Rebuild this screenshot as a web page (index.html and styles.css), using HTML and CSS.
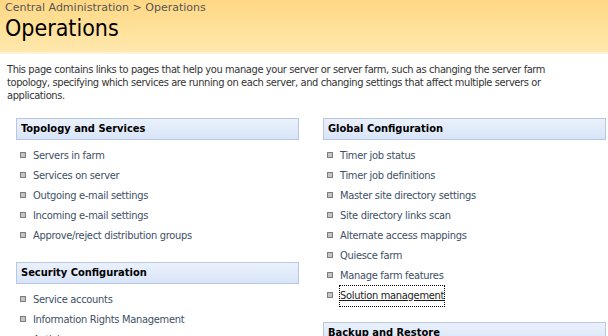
FILE: index.html
```html
<!DOCTYPE html>
<html lang="en">
<head>
    <meta charset="UTF-8">
    <meta name="viewport" content="width=device-width, initial-scale=1.0">
    <link rel="stylesheet" href="styles.css">
</head>
<body>
    <div class="title-band">
        <div class="breadcrumb">
            <a href="#">Central Administration</a> &gt; <span>Operations</span>
        </div>
        <h1 class="page-title">Operations</h1>
    </div>

    <p class="page-desc">
        This page contains links to pages that help you manage your server or server farm, such as changing the server farm<br>
        topology, specifying which services are running on each server, and changing settings that affect multiple servers or<br>
        applications.
    </p>

    <div class="columns">
        <div class="column">
            <div class="section">
                <h3 class="section-head">Topology and Services</h3>
                <ul class="links">
                    <li><a href="#">Servers in farm</a></li>
                    <li><a href="#">Services on server</a></li>
                    <li><a href="#">Outgoing e-mail settings</a></li>
                    <li><a href="#">Incoming e-mail settings</a></li>
                    <li><a href="#">Approve/reject distribution groups</a></li>
                </ul>
            </div>
            <div class="section">
                <h3 class="section-head">Security Configuration</h3>
                <ul class="links">
                    <li><a href="#">Service accounts</a></li>
                    <li><a href="#">Information Rights Management</a></li>
                    <li><a href="#">Antivirus</a></li>
                </ul>
            </div>
        </div>

        <div class="column">
            <div class="section">
                <h3 class="section-head">Global Configuration</h3>
                <ul class="links">
                    <li><a href="#">Timer job status</a></li>
                    <li><a href="#">Timer job definitions</a></li>
                    <li><a href="#">Master site directory settings</a></li>
                    <li><a href="#">Site directory links scan</a></li>
                    <li><a href="#">Alternate access mappings</a></li>
                    <li><a href="#">Quiesce farm</a></li>
                    <li><a href="#">Manage farm features</a></li>
                    <li><a href="#" class="focused">Solution management</a></li>
                </ul>
            </div>
            <div class="section">
                <h3 class="section-head">Backup and Restore</h3>
            </div>
        </div>
    </div>
</body>
</html>
```

FILE: styles.css
```css
body {
    margin: 0;
    font-family: "DejaVu Sans Condensed", "DejaVu Sans", sans-serif;
    font-stretch: condensed;
    font-size: 11px;
    color: #333;
    background: #fff;
    overflow: hidden;
}

/* cabecera amarilla */
.title-band {
    height: 54px;
    padding: 0 5px;
    background: linear-gradient(to bottom, #ffd783 0%, #ffe19a 55%, #ffe8ae 100%);
    border-bottom: 2px solid #fff5d6;
    box-sizing: border-box;
}
.breadcrumb {
    height: 15px;
    line-height: 15px;
    font-family: "DejaVu Sans", sans-serif;
    font-stretch: normal;
    color: #555;
}
.breadcrumb a {
    color: #555;
    text-decoration: none;
}
.page-title {
    margin: 0;
    font-size: 23px;
    font-weight: normal;
    line-height: 26px;
    color: #000;
}

.page-desc {
    margin: 9px 0 0;
    padding: 0 7px;
    line-height: 13px;
    letter-spacing: -0.4px;
    white-space: nowrap;
    color: #333;
}

.columns {
    display: grid;
    grid-template-columns: 283px 283px;
    column-gap: 24px;
    padding-left: 16px;
    margin-top: 16px;
}

.section {
    margin-bottom: 16px;
}
.section-head {
    margin: 0;
    height: 22px;
    line-height: 20px;
    padding-left: 4px;
    box-sizing: border-box;
    font-size: 11px;
    font-weight: bold;
    color: #000;
    background: linear-gradient(to bottom, #ebf1fb, #d8e5f8);
    border: 1px solid #b7c9e2;
}

.links {
    list-style: none;
    margin: 6px 0 0;
    padding: 0;
}
.links li {
    height: 20px;
    line-height: 20px;
    display: flex;
    align-items: center;
    padding-left: 4px;
}
.links li::before {
    content: "";
    width: 4px;
    height: 4px;
    margin-right: 7px;
    margin-top: -2px;
    background: #c4c4c4;
    border: 1px solid #7d7d7d;
    flex: none;
}
.links a {
    color: #3e4f66;
    letter-spacing: -0.3px;
    text-decoration: none;
}
.links a.focused {
    color: #1c1c1c;
    outline: 1px dotted #000;
    text-decoration: underline;
}
```
